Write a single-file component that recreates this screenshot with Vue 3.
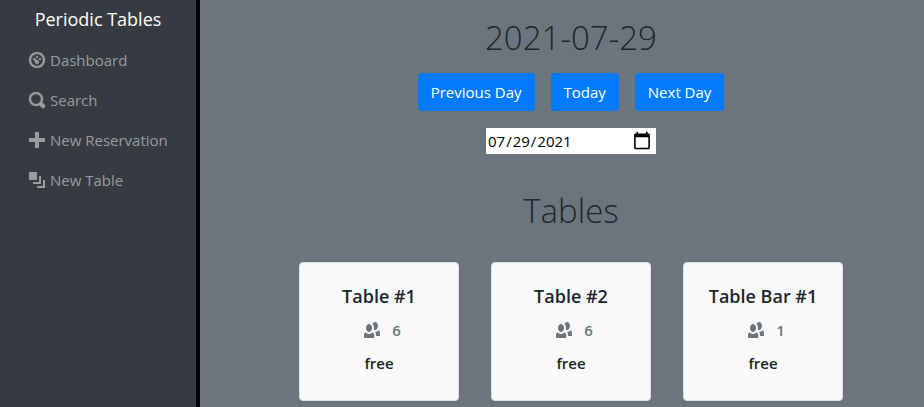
<script setup>
import { ref } from 'vue'

const date = ref('2021-07-29')

const links = [
  { label: 'Dashboard', bold: true, icon: 'M4 0c-2.2 0-4 1.8-4 4s1.8 4 4 4 4-1.8 4-4-1.8-4-4-4zm0 1c1.66 0 3 1.34 3 3s-1.34 3-3 3-3-1.34-3-3 1.34-3 3-3zm0 1c-.28 0-.5.22-.5.5s.22.5.5.5.5-.22.5-.5-.22-.5-.5-.5zm-1.66 1a.5.5 0 0 0-.19.84l.91.91c-.02.08-.06.16-.06.25 0 .55.45 1 1 1s1-.45 1-1-.45-1-1-1c-.09 0-.17.04-.25.06l-.91-.91a.5.5 0 0 0-.44-.16.5.5 0 0 0-.06 0zm3.16 0c-.28 0-.5.22-.5.5s.22.5.5.5.5-.22.5-.5-.22-.5-.5-.5z' },
  { label: 'Search', bold: true, icon: 'M3.5 0c-1.93 0-3.5 1.57-3.5 3.5s1.57 3.5 3.5 3.5c.59 0 1.17-.14 1.66-.41a1 1 0 0 0 .13.13l1 1a1.02 1.02 0 1 0 1.44-1.44l-1-1a1 1 0 0 0-.16-.13c.27-.49.44-1.06.44-1.66 0-1.93-1.55-3.5-3.5-3.5zm0 1c1.39 0 2.5 1.11 2.5 2.5 0 .66-.24 1.27-.66 1.72-.01.01-.02.02-.03.03a1 1 0 0 0-.13.13c-.44.4-1.04.63-1.69.63-1.39 0-2.5-1.11-2.5-2.5s1.11-2.5 2.5-2.5z' },
  { label: 'New Reservation', bold: false, icon: 'M3 0v3h-3v2h3v3h2v-3h3v-2h-3v-3h-2z' },
  { label: 'New Table', bold: false, icon: 'M0 0v4h4v-4h-4zm5 2v3h-3v1h4v-4h-1zm2 2v3h-3v1h4v-4h-1z' },
]

const tables = [
  { name: 'Table #1', capacity: 6, status: 'free' },
  { name: 'Table #2', capacity: 6, status: 'free' },
  { name: 'Table Bar #1', capacity: 1, status: 'free' },
]

function toIso(d) {
  return d.toISOString().slice(0, 10)
}

function shift(days) {
  const d = new Date(date.value + 'T00:00:00Z')
  d.setUTCDate(d.getUTCDate() + days)
  date.value = toIso(d)
}

function today() {
  date.value = toIso(new Date())
}
</script>

<template>
  <div class="layout">
    <nav class="sidebar">
      <a class="brand" href="#">Periodic Tables</a>
      <ul class="links">
        <li v-for="link in links" :key="link.label">
          <a class="link" href="#">
            <svg class="icon" :class="{ bold: link.bold }" viewBox="0 0 8 8" aria-hidden="true"><path :d="link.icon" /></svg>
            <span>{{ link.label }}</span>
          </a>
        </li>
      </ul>
    </nav>

    <main class="content">
      <h1 class="title">{{ date }}</h1>
      <div class="actions">
        <button type="button" class="btn" @click="shift(-1)">Previous Day</button>
        <button type="button" class="btn" @click="today">Today</button>
        <button type="button" class="btn" @click="shift(1)">Next Day</button>
      </div>
      <input v-model="date" class="date" type="date" aria-label="Date" />

      <h2 class="title tables-title">Tables</h2>
      <div class="cards">
        <article v-for="table in tables" :key="table.name" class="card">
          <h3 class="name">{{ table.name }}</h3>
          <p class="capacity">
            <svg class="icon" viewBox="0 0 8 8" aria-hidden="true">
              <path d="M5.5 0c-.51 0-.95.35-1.22.88.45.54.72 1.28.72 2.13 0 .29-.03.55-.09.81.19.11.38.19.59.19.83 0 1.5-.9 1.5-2s-.67-2-1.5-2zm-3 1c-.83 0-1.5.9-1.5 2s.67 2 1.5 2 1.5-.9 1.5-2-.67-2-1.5-2zm4.75 3.16c-.43.51-1.02.82-1.69.84.27.38.44.84.44 1.34v.66h2v-1.66c0-.52-.31-.97-.75-1.19zm-6.5 1c-.44.22-.75.67-.75 1.19v1.66h5v-1.66c0-.52-.31-.97-.75-1.19-.45.53-1.06.84-1.75.84s-1.3-.32-1.75-.84z" />
            </svg>
            <span>{{ table.capacity }}</span>
          </p>
          <p class="status">{{ table.status }}</p>
        </article>
      </div>
    </main>
  </div>
</template>

<style>
body {
  margin: 0;
  background: #6c757d;
}
</style>

<style scoped>
.layout {
  display: flex;
  min-height: 100vh;
  font-family: "Segoe UI", "Open Sans", "Noto Sans", sans-serif;
  font-size: 15px;
  line-height: 24px;
  color: #212529;
  background: #6c757d;
}

.sidebar {
  flex: none;
  box-sizing: border-box;
  width: 200px;
  padding: 3px 0 16px;
  border-right: 4px solid #000;
  background: #363a41;
}

.brand {
  display: block;
  font-size: 18px;
  line-height: 32px;
  text-align: center;
  color: #fff;
  text-decoration: none;
}

.links {
  margin: 5px 0 0;
  padding: 0 0 0 29px;
  list-style: none;
}

.link {
  display: flex;
  align-items: center;
  gap: 5px;
  height: 40px;
  color: #9a9da0;
  text-decoration: none;
}

.icon {
  flex: none;
  width: 16px;
  height: 16px;
  fill: currentColor;
}

.bold {
  overflow: visible;
  stroke: currentColor;
  stroke-width: 0.2;
}

.content {
  flex: 1;
  display: flex;
  flex-direction: column;
  align-items: center;
  padding: 16px 0 6px 18px;
}

.title {
  margin: 0;
  font-size: 33px;
  font-weight: 300;
  line-height: 44px;
}

.actions {
  display: flex;
  gap: 16px;
  margin: 13px 0 17px;
}

.btn {
  height: 38px;
  padding: 0 13px;
  border: 0;
  border-radius: 4px;
  font: inherit;
  color: #fff;
  background: #007bff;
}

.date {
  box-sizing: border-box;
  width: 170px;
  height: 26px;
  padding: 0 4px 0 1px;
  border: 0;
  font: inherit;
  color: #000;
  background: #fff;
}

.date::-webkit-calendar-picker-indicator {
  width: 20px;
  height: 20px;
  padding: 0;
}

.tables-title {
  margin: 35px 0 29px;
}

.cards {
  display: flex;
  flex-wrap: wrap;
  justify-content: center;
  gap: 32px;
}

.card {
  box-sizing: border-box;
  width: 160px;
  padding: 20px 8px 25px;
  border: 1px solid #dfe1e4;
  border-radius: 4px;
  text-align: center;
  background: #f8f9fa;
}

.name {
  margin: 0 0 9px;
  font-size: 18px;
  font-weight: 600;
  line-height: 26px;
}

.capacity {
  display: flex;
  align-items: center;
  justify-content: center;
  gap: 12px;
  margin: 0 0 9px;
  padding-left: 7px;
  font-weight: 600;
  line-height: 24px;
  color: #6c757d;
}

.status {
  margin: 0;
  font-weight: 600;
}
</style>
